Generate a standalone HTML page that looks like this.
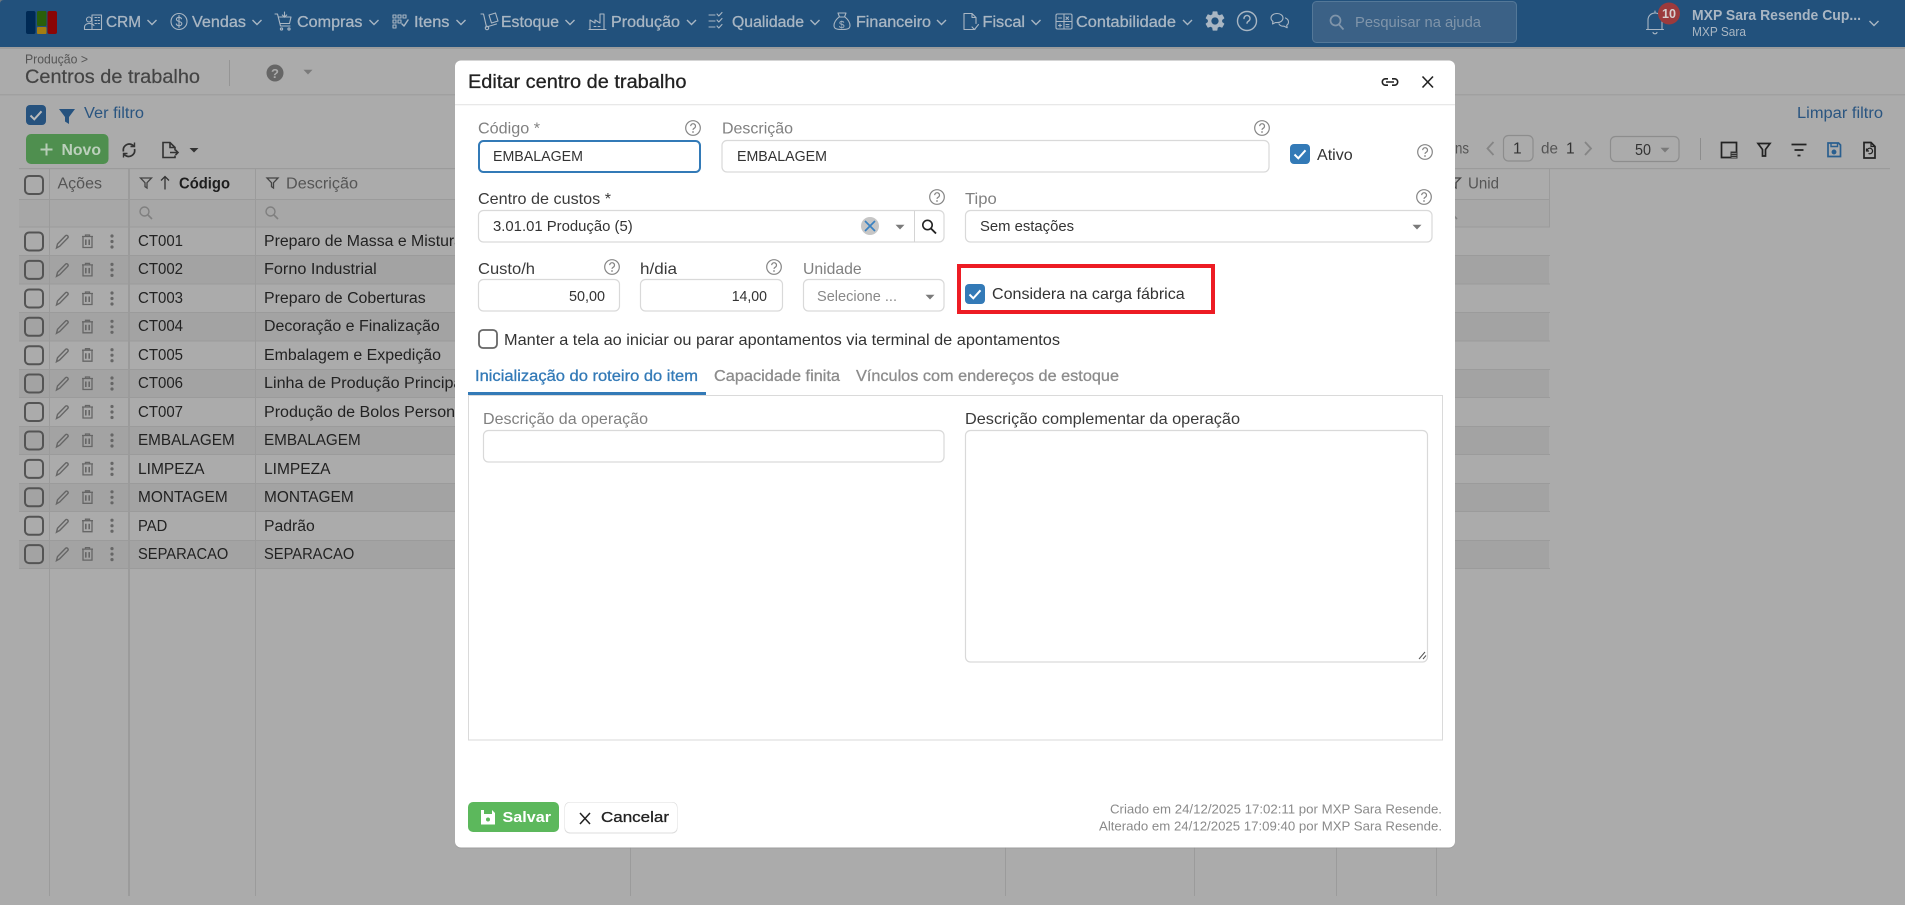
<!DOCTYPE html>
<html lang="pt-BR">
<head>
<meta charset="utf-8">
<title>Centros de trabalho</title>
<style>
html,body{margin:0;padding:0;width:1905px;height:905px;overflow:hidden;background:#ababab}
svg{display:block;position:absolute;left:0;top:0}
text{font-family:"Liberation Sans",Arial,sans-serif;white-space:pre}
.nav{font-size:15.5px;fill:#a9b6c3;stroke:#a9b6c3;stroke-width:.3}
.nv{fill:none;stroke:#a9b6c3;stroke-width:1.1;stroke-linecap:round;stroke-linejoin:round}
.chev{fill:none;stroke:#a9b6c3;stroke-width:1.4}
.t{font-size:15.5px;fill:#222}
.d{font-size:15.5px;fill:#222}
.l{font-size:16px;fill:#808080}
.k{font-size:16px;fill:#3a3a3a}
.i{font-size:15px;fill:#333}
.box{fill:#fff;stroke:#d9d9d9;stroke-width:1.2}
</style>
</head>
<body>
<svg xmlns="http://www.w3.org/2000/svg" width="1905" height="905" viewBox="0 0 1905 905">
<defs>
  <g id="help"><circle r="7.3" fill="none" stroke="#858585" stroke-width="1.2"/><path d="M-2.3-1.9a2.4 2.4 0 1 1 3.6 2.1c-.9.5-1.3 1-1.3 1.7" fill="none" stroke="#858585" stroke-width="1.2"/><circle cy="4" r=".9" fill="#858585"/></g>
  <g id="cb"><rect width="20" height="20" rx="4" fill="#337ab7"/><path d="M4.5 10.5l3.8 3.8 7.2-8" fill="none" stroke="#fff" stroke-width="2"/></g>
  <g id="ub"><rect x="1" y="1" width="18" height="18" rx="4" fill="none" stroke="#545454" stroke-width="2"/></g>
  <path id="caret" d="M-4.5-2.2h9L0 2.5z" fill="#7a7a7a"/>
  <path id="nc" class="chev" d="M-4.5-2L0 2.5 4.5-2"/>
  <g id="sr"><circle cx="-1.5" cy="-1.5" r="4.5" fill="none" stroke="#7f7f7f" stroke-width="1.4"/><path d="M2 2l4 4" stroke="#7f7f7f" stroke-width="1.6"/></g>
  <path id="fn" d="M-5.5-5h11L1-.3V5L-1 3.6V-.3z" fill="none" stroke="#444" stroke-width="1.3"/>
  <g id="acts">
    <path d="M56.5 20.5l1-4 8-8.2c.7-.7 1.6-.7 2.2 0s.7 1.5 0 2.2l-8 8.2z" transform="translate(0 .5)" fill="none" stroke="#666" stroke-width="1.4"/>
    <g fill="none" stroke="#666" stroke-width="1.3"><path d="M82 9.5h11M85.5 9.5V8h4v1.5M83 10v10.5h9V10"/><path d="M85.8 12.5v5.5M89.2 12.5v5.5" stroke-width="1.6"/></g>
    <circle cx="112" cy="9" r="1.6" fill="#666"/><circle cx="112" cy="14.5" r="1.6" fill="#666"/><circle cx="112" cy="20" r="1.6" fill="#666"/>
    <use href="#ub" x="24" y="4.5"/>
  </g>
</defs>

<!-- page background -->
<rect width="1905" height="905" fill="#ababab"/>

<!-- top bar -->
<rect width="1905" height="47" fill="#22517c"/>
<rect y="47" width="1905" height="2" fill="#9d9d9d"/>
<path d="M0 0h4Q0 0 0 4z" fill="#6d7780"/>
<rect x="26" y="11" width="9.5" height="23" rx="2" fill="#002a55"/>
<rect x="37" y="11" width="9.5" height="15" rx="1.5" fill="#2a5f0a"/>
<rect x="37" y="27" width="9.5" height="7" rx="1" fill="#a37d12"/>
<rect x="47.5" y="11" width="9.5" height="23" rx="2" fill="#8a0505"/>

<g class="nv">
  <!-- CRM -->
  <path d="M92 29.500V15h9.500v14.500M85 29.500h16.500M84.500 29.500v-2.500c0-2 2-3.500 4.500-3.500s4 .8 5 2"/><circle cx="89" cy="19.500" r="2.500"/>
  <path d="M95 17.500h1.500M98 17.500h1.500M95 20.500h1.500M98 20.500h1.500M95 23.500h1.500M98 23.500h1.500"/>
  <!-- Vendas -->
  <circle cx="179" cy="21.500" r="8"/>
  <path d="M181.500 18.800c-.4-1-1.300-1.500-2.500-1.500-1.500 0-2.600.8-2.600 2 0 2.900 5.400 1.500 5.400 4.300 0 1.300-1.200 2.100-2.800 2.100-1.300 0-2.300-.6-2.700-1.700M179 15.500v12"/>
  <!-- Compras -->
  <path d="M275 14h2.500l3 12h9.500M278.500 17h12.500l-1.500 6.500h-9M284.500 12v5M282.300 15l2.200 2.200 2.200-2.200"/><circle cx="281.500" cy="29" r="1.100"/><circle cx="289" cy="29" r="1.100"/>
  <!-- Itens -->
  <path d="M393 15h3v3h-3zM398 15h3v3h-3zM403 15h3v3h-3zM393 20h3v3h-3zM398 20h3v3h-3zM393 25h3v3h-3z"/><path d="M402 24l2 2 4-6" stroke-width="1.500"/>
  <!-- Estoque -->
  <path d="M481 14h2.500l3 13 10-3M489 15l6.500-2 2.500 8-6.500 2z"/><circle cx="487" cy="28" r="1.700"/>
  <!-- Producao -->
  <path d="M590 29.500V20l5 3v-3l5 3v-9h4v15.500zM594 26.500h2M598 26.500h2"/><path d="M589 29.500h17"/>
  <!-- Qualidade -->
  <path d="M709 15h6M709 21h6M709 27h6M717 14l1.800 2 3.200-3.500M717 20l1.800 2 3.200-3.500M717 26l1.800 2 3.200-3.500"/>
  <!-- Financeiro -->
  <path d="M838 13h8l-1.500 4h-5zM839 17c-3.500 3-5 6-5 8.500 0 3 2 4 8 4s8-1 8-4c0-2.500-1.500-5.500-5-8.500"/><text x="839" y="28" font-size="10" fill="#a9b6c3" stroke="none">$</text>
  <!-- Fiscal -->
  <path d="M975 29.500h-11v-16h8l4 4v6M972 13.500v4h4M972 27l2.500 2.500 4-5"/>
  <!-- Contabilidade -->
  <rect x="1056" y="14" width="16" height="15" rx="1.500"/><path d="M1064 14v15M1056 21.500h16M1058.500 18h3M1066 17l2.500 2.500M1068.500 17l-2.500 2.500M1058.500 25.500h3M1060 24v3M1066 24.500h3M1066 26.800h3"/>
</g>

<g>
  <text class="nav" x="106" y="27" textLength="35" lengthAdjust="spacingAndGlyphs">CRM</text><use href="#nc" x="152" y="22"/>
  <text class="nav" x="192" y="27" textLength="54" lengthAdjust="spacingAndGlyphs">Vendas</text><use href="#nc" x="257" y="22"/>
  <text class="nav" x="297" y="27" textLength="65.500" lengthAdjust="spacingAndGlyphs">Compras</text><use href="#nc" x="374" y="22"/>
  <text class="nav" x="414" y="27" textLength="35.500" lengthAdjust="spacingAndGlyphs">Itens</text><use href="#nc" x="461" y="22"/>
  <text class="nav" x="501" y="27" textLength="58" lengthAdjust="spacingAndGlyphs">Estoque</text><use href="#nc" x="570" y="22"/>
  <text class="nav" x="611" y="27" textLength="69" lengthAdjust="spacingAndGlyphs">Produção</text><use href="#nc" x="691.500" y="22"/>
  <text class="nav" x="732" y="27" textLength="72" lengthAdjust="spacingAndGlyphs">Qualidade</text><use href="#nc" x="815" y="22"/>
  <text class="nav" x="856" y="27" textLength="75" lengthAdjust="spacingAndGlyphs">Financeiro</text><use href="#nc" x="941.500" y="22"/>
  <text class="nav" x="982.500" y="27" textLength="42.500" lengthAdjust="spacingAndGlyphs">Fiscal</text><use href="#nc" x="1036" y="22"/>
  <text class="nav" x="1076" y="27" textLength="100" lengthAdjust="spacingAndGlyphs">Contabilidade</text><use href="#nc" x="1187.500" y="22"/>
</g>
<path transform="translate(1203 9)" fill="#a9b6c3" d="M19.140 12.940c.04-.3.06-.61.06-.94 0-.32-.02-.64-.07-.94l2.030-1.580c.18-.14.23-.41.12-.61l-1.920-3.320c-.12-.22-.37-.29-.59-.22l-2.390.96c-.5-.38-1.030-.7-1.620-.94l-.36-2.540c-.04-.24-.24-.41-.48-.41h-3.840c-.24 0-.43.17-.47.41l-.36 2.540c-.59.24-1.130.57-1.620.94l-2.390-.96c-.22-.08-.47 0-.59.22L2.740 8.870c-.12.21-.08.47.12.61l2.030 1.580c-.05.3-.09.63-.09.94s.02.64.07.94l-2.030 1.580c-.18.14-.23.41-.12.61l1.920 3.320c.12.22.37.29.59.22l2.390-.96c.5.38 1.030.7 1.620.94l.36 2.540c.05.24.24.41.48.41h3.840c.24 0 .44-.17.47-.41l.36-2.540c.59-.24 1.130-.56 1.620-.94l2.390.96c.22.08.47 0 .59-.22l1.920-3.320c.12-.22.07-.47-.12-.61l-2.010-1.580zM12 15.600c-1.980 0-3.600-1.620-3.600-3.600s1.620-3.600 3.600-3.600 3.600 1.620 3.600 3.600-1.620 3.600-3.600 3.600z"/>
<g class="nv">
  <circle cx="1247" cy="21" r="9.500" stroke-width="1.400"/>
  <path d="M1244 18.500a3 3 0 1 1 4.500 2.600c-1 .6-1.500 1.200-1.500 2.100" stroke-width="1.400"/>
  <path d="M1277 13.500c-3.500 0-6 2-6 4.500 0 1.500.8 2.700 2 3.500l-.5 2.500 3-1.500c.5.1 1 .1 1.500.1 3.500 0 6-2 6-4.600s-2.500-4.500-6-4.500zM1285.500 18c1.800.8 3 2.200 3 4 0 1.300-.7 2.500-1.800 3.200l.5 2.500-3-1.500c-2.200.2-4.200-.6-5.200-2.200"/>
</g>
<rect x="1312.500" y="1.500" width="204" height="41" rx="4" fill="#3b6186" stroke="#547898"/>
<g fill="none" stroke="#8095aa" stroke-width="1.700"><circle cx="1335.500" cy="20.500" r="5"/><path d="M1339 24.500l4.500 5"/></g>
<text x="1355" y="27" font-size="15" fill="#8095aa" textLength="126" lengthAdjust="spacingAndGlyphs">Pesquisar na ajuda</text>
<g class="nv" stroke-width="1.400"><path d="M1648 29v-9c0-4 3-7 7-7s7 3 7 7v9M1646.500 29.500h17M1655 13v-2"/><path d="M1653 32.500a2.200 2.200 0 0 0 4 0"/></g>
<circle cx="1669" cy="13.500" r="11" fill="#9c3a3c"/>
<text x="1662" y="18" font-size="12.500" font-weight="700" fill="#d8d0d0" textLength="14" lengthAdjust="spacingAndGlyphs">10</text>
<text x="1692" y="20" font-size="15" font-weight="700" fill="#a9b6c3" textLength="169" lengthAdjust="spacingAndGlyphs">MXP Sara Resende Cup...</text>
<text x="1692" y="36" font-size="13" fill="#a9b6c3" textLength="54" lengthAdjust="spacingAndGlyphs">MXP Sara</text>
<use href="#nc" x="1874" y="23"/>

<!-- page title -->
<text x="25" y="63.500" font-size="12.500" fill="#555" textLength="63" lengthAdjust="spacingAndGlyphs">Produção &gt;</text>
<text x="25" y="83" font-size="19.500" fill="#444" textLength="175" lengthAdjust="spacingAndGlyphs" stroke="#444" stroke-width=".2">Centros de trabalho</text>
<rect x="229" y="60" width="1" height="26" fill="#959595"/>
<circle cx="275" cy="73" r="8.500" fill="#666"/>
<text x="275" y="78" font-size="13" font-weight="700" fill="#ababab" text-anchor="middle">?</text>
<use href="#caret" x="308" y="72"/>
<rect y="94" width="1905" height="1.500" fill="#a0a0a0"/>

<!-- filter strip -->
<rect x="26" y="105" width="20" height="20" rx="4" fill="#26527e"/>
<path d="M30.500 115.500l3.800 3.800 7.200-8" fill="none" stroke="#bbb" stroke-width="2"/>
<path d="M59 109h16l-6 8v7l-4-2.500V117z" fill="#26527e"/>
<text x="84" y="118" font-size="15.500" fill="#2a5580" textLength="60" lengthAdjust="spacingAndGlyphs">Ver filtro</text>
<text x="1797" y="118" font-size="15.500" fill="#2a5580" textLength="86" lengthAdjust="spacingAndGlyphs">Limpar filtro</text>

<!-- toolbar -->
<rect x="26" y="134" width="82.500" height="30" rx="5" fill="#4f8f4f"/>
<path d="M46.500 143.500v12M40.500 149.500h12" stroke="#b7ccb7" stroke-width="2"/>
<text x="61.500" y="155" font-size="15.500" font-weight="700" fill="#bcd0bc" textLength="39.500" lengthAdjust="spacingAndGlyphs">Novo</text>
<g fill="none" stroke="#333" stroke-width="1.700"><path d="M123.500 151.500a6 6 0 0 1 9-6.500l1.500 1M134.500 149a6 6 0 0 1-9 6.500l-1.500-1"/><path d="M134.500 142.500v4h-4M123.500 157.500v-4h4" stroke-width="1.400"/></g>
<g fill="none" stroke="#333" stroke-width="1.600"><path d="M175 155.500v2h-12v-15h7l5 5v3M170 143v4.500h5"/><path d="M170 152.500h8M175.500 150l2.500 2.500-2.500 2.500"/></g>
<path d="M189.500 148h9l-4.500 4.500z" fill="#333"/>

<!-- pagination -->
<text x="1455" y="153.500" font-size="15.500" fill="#555" textLength="14" lengthAdjust="spacingAndGlyphs">ns</text>
<path d="M1493.500 142l-6 6.500 6 6.500" fill="none" stroke="#858585" stroke-width="1.800"/>
<rect x="1503.500" y="135.500" width="29.500" height="25.500" rx="5" fill="none" stroke="#8d8d8d" stroke-width="1.200"/>
<text x="1513" y="153.500" font-size="15.500" fill="#333">1</text>
<text x="1541" y="153.500" font-size="15.500" fill="#555" textLength="17" lengthAdjust="spacingAndGlyphs">de</text>
<text x="1566" y="153.500" font-size="15.500" fill="#333">1</text>
<path d="M1585 142l6 6.500-6 6.500" fill="none" stroke="#858585" stroke-width="1.800"/>
<rect x="1610.500" y="136.500" width="68.500" height="25" rx="5" fill="none" stroke="#8d8d8d" stroke-width="1.200"/>
<text x="1635" y="155" font-size="15.500" fill="#333" textLength="16" lengthAdjust="spacingAndGlyphs">50</text>
<use href="#caret" x="1665" y="150"/>
<rect x="1700" y="138" width="1" height="22" fill="#8d8d8d"/>
<g fill="none" stroke="#222" stroke-width="1.700">
  <path d="M1733 157.500h-11.500v-15h15v9"/><rect x="1730.500" y="151.500" width="7" height="7" fill="#333" stroke="none"/>
  <path d="M1731.500 153.500h5M1731.500 155.500h5M1731.500 157.500h5" stroke="#999" stroke-width=".8"/>
  <path d="M1758 143.500h12l-4.500 6v6.500h-3v-6.500z"/>
  <path d="M1791.500 144.500h15M1794.500 150h9M1797.500 155.500h3" stroke-width="1.800"/>
  <g stroke="#2a5f8f"><path d="M1828 143h10.500l2 2v11.500h-12.500z"/><path d="M1831 143v3.500h6.500V143" stroke-width="1.400"/><circle cx="1834" cy="152" r="1.600" fill="#2a5f8f"/></g>
  <path d="M1864 142.500h7l4 4v11.500h-11z"/><path d="M1871 142.500v4h4" stroke-width="1.200"/><path d="M1867 150.500a2.800 2.800 0 1 1 1.500 3M1866.500 148.500v2.500h2.500" stroke-width="1.200"/>
</g>

<!-- table background -->
<rect x="19" y="199" width="1530" height="28" fill="#a7a7a7"/>
<g fill="#a3a3a3">
  <rect x="19" y="255" width="1530" height="29"/><rect x="19" y="312" width="1530" height="29"/><rect x="19" y="369" width="1530" height="28"/><rect x="19" y="426" width="1530" height="28"/><rect x="19" y="483" width="1530" height="28"/><rect x="19" y="540" width="1530" height="28"/>
</g>
<g fill="#9b9b9b">
  <rect x="19" y="168" width="1871" height="1.200"/><rect x="19" y="199" width="1531" height="1"/><rect x="19" y="226.500" width="1531" height="1"/>
  <rect x="19" y="255" width="1531" height="1"/><rect x="19" y="283.500" width="1531" height="1"/><rect x="19" y="312" width="1531" height="1"/><rect x="19" y="340.500" width="1531" height="1"/><rect x="19" y="369" width="1531" height="1"/><rect x="19" y="397" width="1531" height="1"/><rect x="19" y="426" width="1531" height="1"/><rect x="19" y="454" width="1531" height="1"/><rect x="19" y="483" width="1531" height="1"/><rect x="19" y="511" width="1531" height="1"/><rect x="19" y="540" width="1531" height="1"/><rect x="19" y="568" width="1531" height="1"/>
  <rect x="49" y="168" width="1" height="728"/><rect x="128" y="168" width="2" height="728"/><rect x="255" y="168" width="1" height="728"/><rect x="630" y="168" width="1" height="728"/><rect x="1005" y="168" width="1" height="728"/><rect x="1194" y="168" width="1" height="728"/><rect x="1336" y="168" width="1" height="728"/><rect x="1436" y="168" width="1" height="728"/><rect x="1549" y="168" width="1" height="59"/>
</g>

<!-- table header -->
<use href="#ub" x="24" y="175"/>
<text x="57.500" y="188.500" font-size="15.500" fill="#555" textLength="44.500" lengthAdjust="spacingAndGlyphs">Ações</text>
<use href="#fn" x="146" y="183"/>
<path d="M165 189.500v-13M161 180.500l4-4 4 4" fill="none" stroke="#333" stroke-width="1.300"/>
<text x="179" y="188.500" font-size="15.500" font-weight="700" fill="#1d1d1d" textLength="51" lengthAdjust="spacingAndGlyphs">Código</text>
<use href="#fn" x="272.500" y="183"/>
<text x="286" y="188.500" font-size="15.500" fill="#555" textLength="72" lengthAdjust="spacingAndGlyphs">Descrição</text>
<use href="#fn" x="1455" y="183"/>
<text x="1468" y="188.500" font-size="15.500" fill="#555" textLength="31" lengthAdjust="spacingAndGlyphs">Unid</text>
<use href="#sr" x="146" y="213"/><use href="#sr" x="272" y="213"/><use href="#sr" x="1451" y="213"/>

<!-- rows -->
<use href="#acts" y="227"/><use href="#acts" y="255.400"/><use href="#acts" y="284"/><use href="#acts" y="312.300"/><use href="#acts" y="340.700"/><use href="#acts" y="369"/><use href="#acts" y="397.500"/><use href="#acts" y="426"/><use href="#acts" y="454.400"/><use href="#acts" y="482.800"/><use href="#acts" y="511.200"/><use href="#acts" y="539.600"/>
<g>
<text class="t" x="138" y="246" textLength="45" lengthAdjust="spacingAndGlyphs">CT001</text><text class="d" x="264" y="246" textLength="199" lengthAdjust="spacingAndGlyphs">Preparo de Massa e Mistura</text>
<text class="t" x="138" y="274" textLength="45" lengthAdjust="spacingAndGlyphs">CT002</text><text class="d" x="264" y="274" textLength="112.700" lengthAdjust="spacingAndGlyphs">Forno Industrial</text>
<text class="t" x="138" y="303" textLength="45" lengthAdjust="spacingAndGlyphs">CT003</text><text class="d" x="264" y="303" textLength="161.700" lengthAdjust="spacingAndGlyphs">Preparo de Coberturas</text>
<text class="t" x="138" y="331" textLength="45" lengthAdjust="spacingAndGlyphs">CT004</text><text class="d" x="264" y="331" textLength="175.700" lengthAdjust="spacingAndGlyphs">Decoração e Finalização</text>
<text class="t" x="138" y="360" textLength="45" lengthAdjust="spacingAndGlyphs">CT005</text><text class="d" x="264" y="360" textLength="177" lengthAdjust="spacingAndGlyphs">Embalagem e Expedição</text>
<text class="t" x="138" y="388" textLength="45" lengthAdjust="spacingAndGlyphs">CT006</text><text class="d" x="264" y="388" textLength="202" lengthAdjust="spacingAndGlyphs">Linha de Produção Principal</text>
<text class="t" x="138" y="417" textLength="45" lengthAdjust="spacingAndGlyphs">CT007</text><text class="d" x="264" y="417" textLength="250" lengthAdjust="spacingAndGlyphs">Produção de Bolos Personalizados</text>
<text class="t" x="138" y="445" textLength="96.700" lengthAdjust="spacingAndGlyphs">EMBALAGEM</text><text class="d" x="264" y="445" textLength="96.700" lengthAdjust="spacingAndGlyphs">EMBALAGEM</text>
<text class="t" x="138" y="474" textLength="66.500" lengthAdjust="spacingAndGlyphs">LIMPEZA</text><text class="d" x="264" y="474" textLength="66.500" lengthAdjust="spacingAndGlyphs">LIMPEZA</text>
<text class="t" x="138" y="502" textLength="89.700" lengthAdjust="spacingAndGlyphs">MONTAGEM</text><text class="d" x="264" y="502" textLength="89.700" lengthAdjust="spacingAndGlyphs">MONTAGEM</text>
<text class="t" x="138" y="531" textLength="29.300" lengthAdjust="spacingAndGlyphs">PAD</text><text class="d" x="264" y="531" textLength="50.700" lengthAdjust="spacingAndGlyphs">Padrão</text>
<text class="t" x="138" y="559" textLength="90.300" lengthAdjust="spacingAndGlyphs">SEPARACAO</text><text class="d" x="264" y="559" textLength="90.300" lengthAdjust="spacingAndGlyphs">SEPARACAO</text>
</g>

<!-- modal -->
<rect x="455" y="60.500" width="1000" height="787" rx="6" fill="#8f8f8f" opacity=".5" transform="translate(0 1)"/>
<rect x="455" y="60.500" width="1000" height="787" rx="6" fill="#fff"/>
<rect x="455" y="104" width="1000" height="1.300" fill="#e8e8e8"/>
<text x="468" y="88" font-size="19.500" fill="#222" stroke="#222" stroke-width=".3" textLength="218.500" lengthAdjust="spacingAndGlyphs">Editar centro de trabalho</text>
<g fill="none" stroke="#222" stroke-width="1.600">
  <path d="M1388 78.800h-2.500a3.200 3.200 0 0 0 0 6.400h2.500M1392 78.800h2.500a3.200 3.200 0 0 1 0 6.400H1392M1386 82h8"/>
  <path d="M1422.500 76.500l10.500 11M1433 76.500l-10.500 11" stroke-width="1.600"/>
</g>

<!-- row 1 -->
<text class="l" x="478" y="133.500" textLength="62" lengthAdjust="spacingAndGlyphs">Código *</text>
<use href="#help" x="693" y="128"/>
<rect x="479" y="141" width="221" height="31" rx="4.500" fill="#fff" stroke="#337ab7" stroke-width="2"/>
<text class="i" x="493" y="161" textLength="90" lengthAdjust="spacingAndGlyphs">EMBALAGEM</text>
<text class="l" x="722" y="133.500" textLength="71" lengthAdjust="spacingAndGlyphs">Descrição</text>
<use href="#help" x="1262" y="128"/>
<rect class="box" x="722" y="140.500" width="547" height="31.500" rx="5"/>
<text class="i" x="737" y="161" textLength="90" lengthAdjust="spacingAndGlyphs">EMBALAGEM</text>
<use href="#cb" x="1290" y="144"/>
<text x="1317" y="160" font-size="16" fill="#333" textLength="35.700" lengthAdjust="spacingAndGlyphs">Ativo</text>
<use href="#help" x="1425" y="152"/>

<!-- row 2 -->
<text class="k" x="478" y="204" textLength="133" lengthAdjust="spacingAndGlyphs">Centro de custos *</text>
<use href="#help" x="937" y="197"/>
<rect class="box" x="478.500" y="210.500" width="465.500" height="31.500" rx="5"/>
<rect x="914" y="211" width="1" height="31" fill="#d4d4d4"/>
<text class="i" x="493" y="231" textLength="139.700" lengthAdjust="spacingAndGlyphs">3.01.01 Produção (5)</text>
<circle cx="870" cy="226" r="9" fill="#c6c6c6"/>
<path d="M865 221l10 10M875 221l-10 10" stroke="#3a82c2" stroke-width="1.700"/>
<use href="#caret" x="900" y="227"/>
<g fill="none" stroke="#222" stroke-width="1.600"><circle cx="927.500" cy="225" r="4.700"/><path d="M931 228.500l5 5" stroke-width="1.900"/></g>
<text class="l" x="965" y="204" textLength="31.700" lengthAdjust="spacingAndGlyphs">Tipo</text>
<use href="#help" x="1424" y="197"/>
<rect class="box" x="965.500" y="210.500" width="466.500" height="31.500" rx="5"/>
<text class="i" x="980" y="231" textLength="94" lengthAdjust="spacingAndGlyphs">Sem estações</text>
<use href="#caret" x="1417" y="227"/>

<!-- row 3 -->
<text class="k" x="478" y="274" textLength="57" lengthAdjust="spacingAndGlyphs">Custo/h</text>
<use href="#help" x="612" y="267"/>
<rect class="box" x="478.500" y="279.500" width="141" height="31.500" rx="5"/>
<text class="i" x="569" y="301" textLength="36" lengthAdjust="spacingAndGlyphs">50,00</text>
<text class="k" x="640" y="274" textLength="37" lengthAdjust="spacingAndGlyphs">h/dia</text>
<use href="#help" x="774" y="267"/>
<rect class="box" x="640.500" y="279.500" width="142" height="31.500" rx="5"/>
<text class="i" x="731.700" y="301" textLength="35.300" lengthAdjust="spacingAndGlyphs">14,00</text>
<text class="l" x="803" y="274" textLength="58.700" lengthAdjust="spacingAndGlyphs">Unidade</text>
<rect class="box" x="803.500" y="279.500" width="140.500" height="31.500" rx="5"/>
<text x="817" y="301" font-size="15" fill="#888" textLength="80" lengthAdjust="spacingAndGlyphs">Selecione ...</text>
<use href="#caret" x="930" y="297"/>
<rect x="959" y="266" width="254" height="46" fill="none" stroke="#ed1c24" stroke-width="4"/>
<use href="#cb" x="965" y="284"/>
<text x="992" y="299" font-size="16" fill="#333" textLength="192.700" lengthAdjust="spacingAndGlyphs">Considera na carga fábrica</text>

<!-- checkbox line -->
<rect x="479" y="330" width="18" height="18" rx="4" fill="#fff" stroke="#666" stroke-width="1.800"/>
<text x="504" y="345" font-size="16" fill="#333" textLength="556" lengthAdjust="spacingAndGlyphs">Manter a tela ao iniciar ou parar apontamentos via terminal de apontamentos</text>

<!-- tabs -->
<text x="475" y="381" font-size="15.500" fill="#337ab7" stroke="#337ab7" stroke-width=".3" textLength="223" lengthAdjust="spacingAndGlyphs">Inicialização do roteiro do item</text>
<text x="714" y="381" font-size="15.500" fill="#8c8c8c" stroke="#8c8c8c" stroke-width=".3" textLength="126" lengthAdjust="spacingAndGlyphs">Capacidade finita</text>
<text x="856" y="381" font-size="15.500" fill="#8c8c8c" stroke="#8c8c8c" stroke-width=".3" textLength="263" lengthAdjust="spacingAndGlyphs">Vínculos com endereços de estoque</text>
<rect x="468.500" y="395.500" width="974" height="344.500" fill="#fff" stroke="#dadada" stroke-width="1"/>
<rect x="468" y="392" width="238" height="3" fill="#337ab7"/>

<!-- tab panel -->
<text class="l" x="483" y="424" textLength="165" lengthAdjust="spacingAndGlyphs">Descrição da operação</text>
<rect class="box" x="483.500" y="430.500" width="460.500" height="31.500" rx="5"/>
<text class="k" x="965" y="424" textLength="275" lengthAdjust="spacingAndGlyphs">Descrição complementar da operação</text>
<rect class="box" x="965.500" y="430.500" width="462" height="231.500" rx="5"/>
<path d="M1419 659l6-7M1423 659l3-3.500" stroke="#555" stroke-width="1"/>

<!-- footer -->
<rect x="468" y="802" width="91" height="30" rx="5" fill="#5cb85c"/>
<path d="M481 810h11l3 3v11.500h-14z" fill="#fff"/><rect x="484" y="810" width="8" height="4" fill="#5cb85c"/><rect x="486" y="817.500" width="4" height="4" rx="2" fill="#5cb85c"/>
<text x="502.500" y="822" font-size="15" font-weight="700" fill="#fff" textLength="48.500" lengthAdjust="spacingAndGlyphs">Salvar</text>
<rect x="564.500" y="802" width="113" height="31.500" rx="5" fill="#dcdcdc"/>
<rect x="565" y="802.500" width="112" height="30" rx="5" fill="#fff"/>
<path d="M580 813l10 11M590 813l-10 11" stroke="#222" stroke-width="1.500"/>
<text x="601" y="822" font-size="15" fill="#222" stroke="#222" stroke-width=".3" textLength="68" lengthAdjust="spacingAndGlyphs">Cancelar</text>
<text x="1110" y="813.500" font-size="13" fill="#8a8a8a" textLength="332" lengthAdjust="spacingAndGlyphs">Criado em 24/12/2025 17:02:11 por MXP Sara Resende.</text>
<text x="1099" y="830.500" font-size="13" fill="#8a8a8a" textLength="343" lengthAdjust="spacingAndGlyphs">Alterado em 24/12/2025 17:09:40 por MXP Sara Resende.</text>
</svg>
</body>
</html>
